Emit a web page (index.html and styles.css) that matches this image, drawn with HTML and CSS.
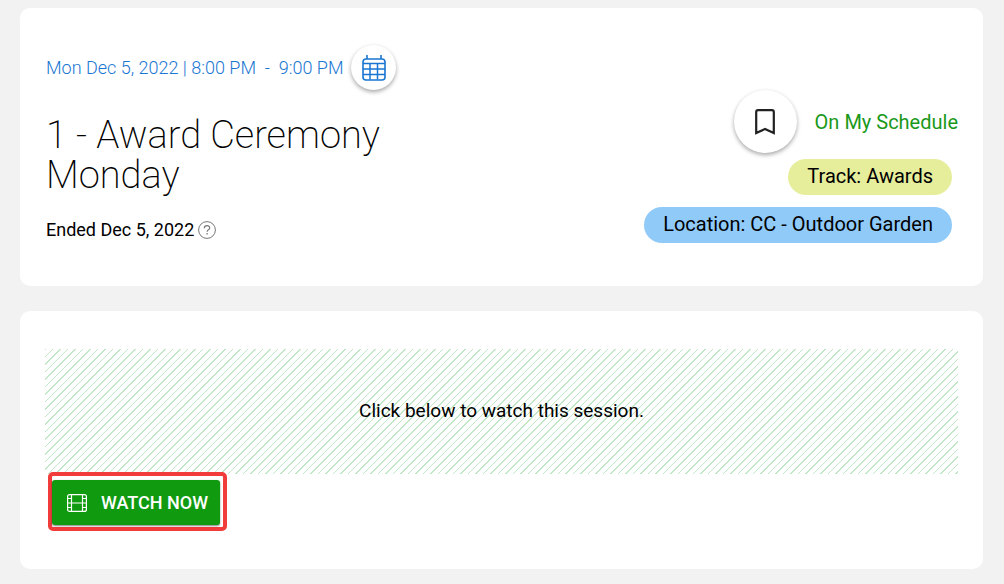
FILE: index.html
```html
<!DOCTYPE html>
<html lang="en">
<head>
    <meta charset="UTF-8">
    <meta name="viewport" content="width=device-width, initial-scale=1.0">
    <title>1 - Award Ceremony Monday</title>
    <link rel="stylesheet" href="styles.css">
</head>
<body>
    <main>
        <section class="card session">
            <div class="details">
                <div class="time">
                    <span>Mon Dec 5, 2022 | 8:00 PM &nbsp;-&nbsp; 9:00 PM</span>
                    <button type="button" class="round calendar" aria-label="Add to calendar">
                        <svg width="24" height="26" viewBox="0 0 24 26" fill="none" stroke="currentColor">
                            <rect x="1" y="4" width="22" height="21" rx="3" stroke-width="1.6"/>
                            <path d="M5 0v4M19 0v4" stroke-width="1.6"/>
                            <path d="M1 8.5h22M1 14h22M1 19.5h22M8 8.5v16M15.5 8.5v16" stroke-width="1.5"/>
                        </svg>
                    </button>
                </div>
                <h1>1 - Award Ceremony Monday</h1>
                <div class="ended">
                    <span>Ended Dec 5, 2022</span>
                    <svg width="18" height="18" viewBox="0 0 18 18" fill="none" stroke="currentColor">
                        <circle cx="9" cy="9" r="8.4"/>
                        <path d="M6.3 7.2c0-3.4 5.4-3.4 5.4-.3 0 2-2.6 1.8-2.6 3.8" stroke-width="1.2"/>
                        <path d="M9.1 12v1.4" stroke-width="1.3"/>
                    </svg>
                </div>
            </div>
            <div class="side">
                <div class="schedule">
                    <button type="button" class="round bookmark" aria-label="Remove from my schedule">
                        <svg width="20" height="26" viewBox="0 0 20 26" fill="none" stroke="currentColor" stroke-width="2.2">
                            <path d="M1.2 24V3q0-1.8 1.8-1.8h14q1.8 0 1.8 1.8v21L10 20z"/>
                        </svg>
                    </button>
                    <span>On My Schedule</span>
                </div>
                <span class="tag track">Track: Awards</span>
                <span class="tag location">Location: CC - Outdoor Garden</span>
            </div>
        </section>

        <section class="card watch">
            <div class="message">Click below to watch this session.</div>
            <div class="highlight">
                <button type="button" class="watch-button">
                    <svg width="20" height="18" viewBox="0 0 20 18" fill="none" stroke="currentColor" stroke-width="1.2">
                        <rect x=".6" y=".6" width="18.8" height="16.8" rx="2"/>
                        <path d="M4.5.5v17M15.5.5v17M4.5 9h11M.5 4.5h4M.5 9h4M.5 13.5h4M15.5 4.5h4M15.5 9h4M15.5 13.5h4"/>
                    </svg>
                    WATCH NOW
                </button>
            </div>
        </section>
    </main>
</body>
</html>
```
FILE: styles.css
```css
body {
    font-family: Roboto, sans-serif;
    font-size: 18px;
    line-height: 24px;
    color: #000;
    background-color: #f2f2f2;
    margin: 0;
}
main {
    display: flex;
    flex-direction: column;
    gap: 25px;
    padding: 8px 21px 15px 20px;
}
.card {
    background-color: #fff;
    border-radius: 10px;
}
.session {
    display: flex;
    justify-content: space-between;
    padding: 37px 25px 36px 26px;
}
.details {
    width: 40%;
}
.time {
    display: flex;
    align-items: center;
    gap: 8px;
    color: #1976d2;
    font-weight: 300;
    white-space: nowrap;
}
button {
    font-family: inherit;
    border: none;
    cursor: pointer;
}
.round {
    display: flex;
    align-items: center;
    justify-content: center;
    flex: none;
    padding: 0;
    border-radius: 50%;
    background-color: #fff;
    box-shadow: 0 2px 4px rgba(0, 0, 0, 0.35);
}
.calendar {
    width: 45px;
    height: 45px;
    color: #1976d2;
}
h1 {
    margin: 25px 0 23px;
    font-size: 38px;
    font-weight: 200;
    line-height: 40px;
}
.ended {
    display: flex;
    align-items: center;
    gap: 4px;
}
.ended svg {
    color: #777;
}
.side {
    display: flex;
    flex-direction: column;
    align-items: flex-end;
    padding-top: 45px;
    font-size: 20px;
}
.schedule {
    display: flex;
    align-items: center;
    gap: 18px;
    margin-bottom: 1px;
    color: #1a981a;
}
.bookmark {
    width: 63px;
    height: 63px;
    color: #212121;
}
.tag {
    margin: 5px 6px 7px 0;
    padding: 5px 19px 7px;
    border-radius: 18px;
}
.track {
    background-color: #e6ee9c;
}
.location {
    background-color: #90caf9;
}
.watch {
    padding: 38px 25px;
}
.message {
    padding: 50px 20px 51px;
    font-size: 19px;
    text-align: center;
    background-image: linear-gradient(135deg, #c2e6c8 5%, transparent 5%, transparent 25%, #c2e6c8 25%, #c2e6c8 30%, transparent 30%, transparent 50%, #c2e6c8 50%, #c2e6c8 55%, transparent 55%, transparent 75%, #c2e6c8 75%, #c2e6c8 80%, transparent 80%);
    background-size: 15px 15px;
}
.highlight {
    width: fit-content;
    margin: -2px 0 0 3px;
    padding: 4px 3px 2px 0;
    border: 4px solid #f23c3c;
    border-radius: 5px;
    background-color: #fff;
}
.watch-button {
    display: flex;
    align-items: center;
    gap: 14px;
    height: 45px;
    padding: 0 12px 0 15px;
    border-radius: 3px;
    color: #fff;
    background-color: #109a10;
    font-size: 18px;
    font-weight: 500;
    box-shadow: 0 1px 2px rgba(0, 0, 0, 0.5);
}
```
